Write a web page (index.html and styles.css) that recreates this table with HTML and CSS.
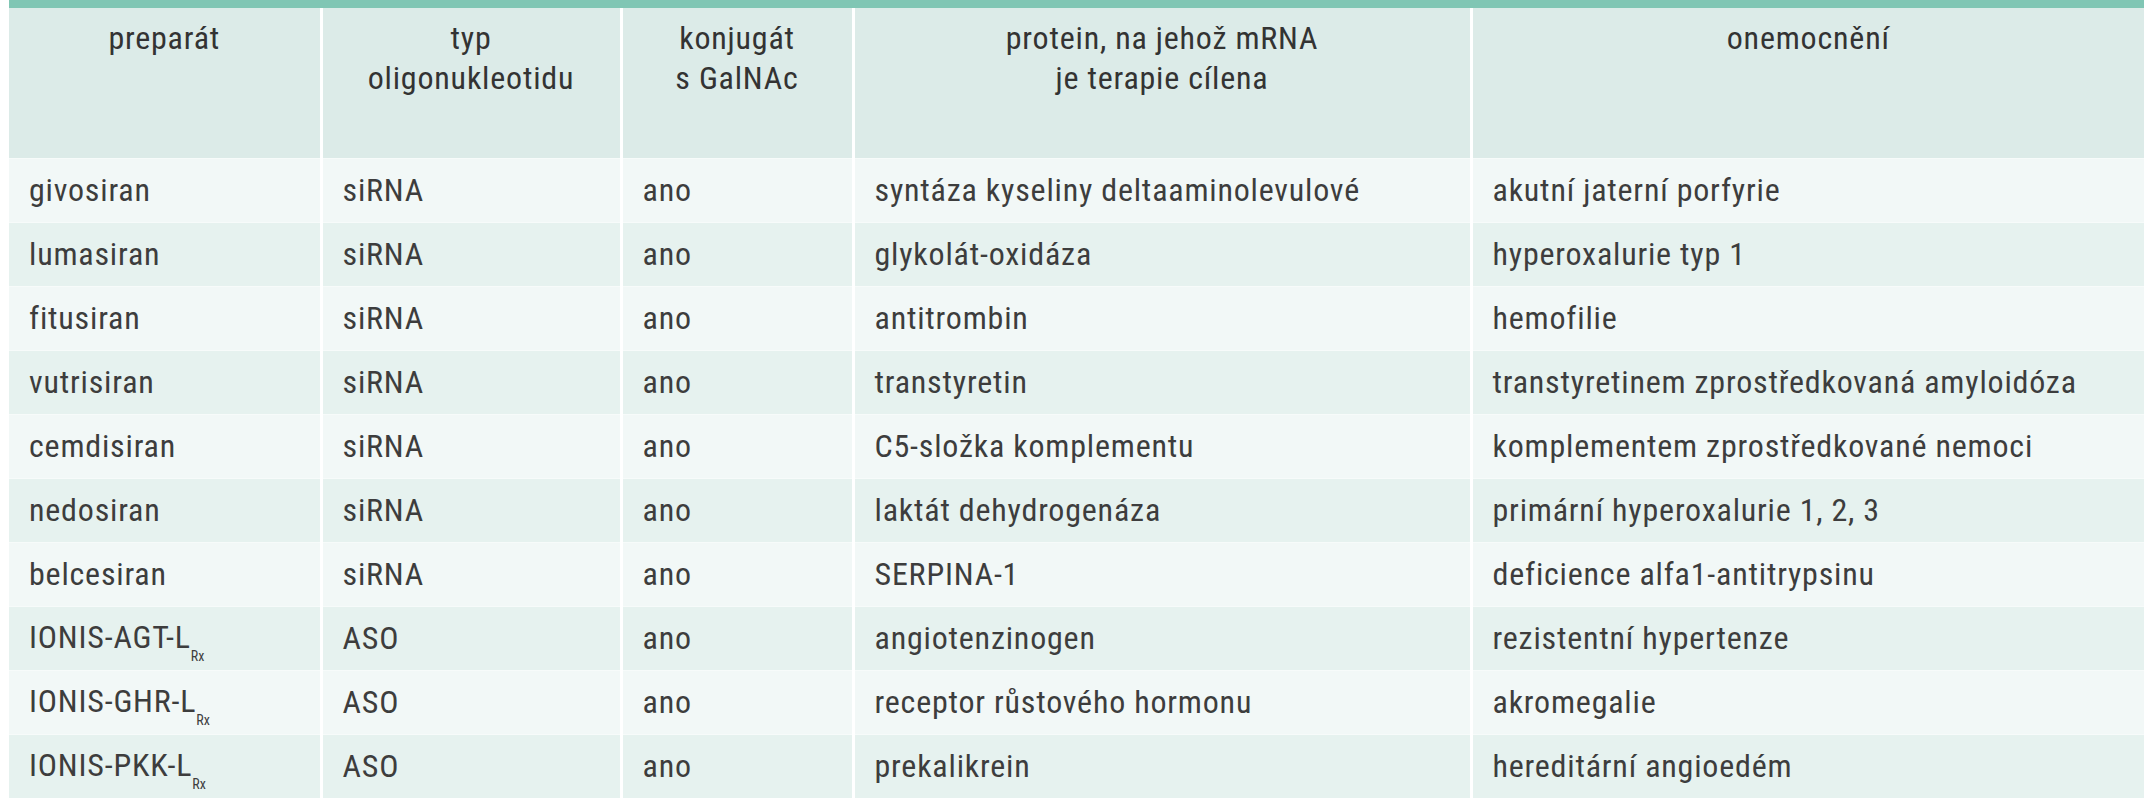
FILE: index.html
```html
<!DOCTYPE html>
<html lang="cs">
<head>
<meta charset="utf-8">
<title>Oligonukleotidy s GalNAc</title>
<link rel="stylesheet" href="styles.css">
</head>
<body>
<table class="drugs">
  <colgroup>
    <col class="c1"><col class="c2"><col class="c3"><col class="c4"><col class="c5">
  </colgroup>
  <thead>
    <tr>
      <th>preparát</th>
      <th>typ<br>oligonukleotidu</th>
      <th>konjugát<br>s GalNAc</th>
      <th>protein, na jehož mRNA<br>je terapie cílena</th>
      <th>onemocnění</th>
    </tr>
  </thead>
  <tbody>
    <tr><td>givosiran</td><td>siRNA</td><td>ano</td><td>syntáza kyseliny deltaaminolevulové</td><td>akutní jaterní porfyrie</td></tr>
    <tr><td>lumasiran</td><td>siRNA</td><td>ano</td><td>glykolát-oxidáza</td><td>hyperoxalurie typ 1</td></tr>
    <tr><td>fitusiran</td><td>siRNA</td><td>ano</td><td>antitrombin</td><td>hemofilie</td></tr>
    <tr><td>vutrisiran</td><td>siRNA</td><td>ano</td><td>transtyretin</td><td>transtyretinem zprostředkovaná amyloidóza</td></tr>
    <tr><td>cemdisiran</td><td>siRNA</td><td>ano</td><td>C5-složka komplementu</td><td>komplementem zprostředkované nemoci</td></tr>
    <tr><td>nedosiran</td><td>siRNA</td><td>ano</td><td>laktát dehydrogenáza</td><td>primární hyperoxalurie 1, 2, 3</td></tr>
    <tr><td>belcesiran</td><td>siRNA</td><td>ano</td><td>SERPINA-1</td><td>deficience alfa1-antitrypsinu</td></tr>
    <tr><td>IONIS-AGT-L<sub>Rx</sub></td><td>ASO</td><td>ano</td><td>angiotenzinogen</td><td>rezistentní hypertenze</td></tr>
    <tr><td>IONIS-GHR-L<sub>Rx</sub></td><td>ASO</td><td>ano</td><td>receptor růstového hormonu</td><td>akromegalie</td></tr>
    <tr><td>IONIS-PKK-L<sub>Rx</sub></td><td>ASO</td><td>ano</td><td>prekalikrein</td><td>hereditární angioedém</td></tr>
  </tbody>
</table>
</body>
</html>
```
FILE: styles.css
```css
html, body {
  margin: 0;
  padding: 0;
  background: #ffffff;
}

body {
  padding: 0 6px 0 9px;
  font-family: "Roboto Condensed", "DejaVu Sans Condensed", "Liberation Sans", sans-serif;
  color: #3d3d3d;
}

.drugs {
  width: 2135px;
  border-collapse: collapse;
  table-layout: fixed;
  border-top: 8px solid #80c6b4;
  font-size: 32px;
  letter-spacing: 0.8px;
}

.c1 { width: 312px; }
.c2 { width: 300px; }
.c3 { width: 232px; }
.c4 { width: 618px; }
.c5 { width: 673px; }

.drugs th,
.drugs td {
  border-left: 3px solid #ffffff;
  text-align: left;
}

.drugs th:first-child,
.drugs td:first-child {
  border-left: 0;
}

.drugs thead th {
  height: 154px;
  box-sizing: border-box;
  padding: 10px 8px 0;
  vertical-align: top;
  text-align: center;
  font-weight: normal;
  line-height: 40px;
  background: #dcebe8;
  color: #333333;
}

.drugs tbody td {
  height: 64px;
  box-sizing: border-box;
  padding: 0 20px;
  vertical-align: middle;
  line-height: 34px;
  white-space: nowrap;
  border-top: 1px solid #f7fbfa;
}

.drugs tbody tr:nth-child(odd) td {
  background: #f2f8f7;
}

.drugs tbody tr:nth-child(even) td {
  background: #e6f2ef;
}

.drugs sub {
  font-size: 14px;
  letter-spacing: 0;
  line-height: 0;
  vertical-align: -13px;
}
```
